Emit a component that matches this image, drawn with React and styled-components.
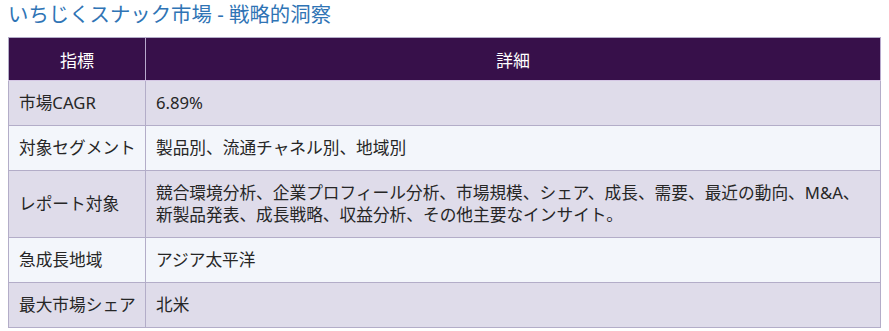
import styled, { createGlobalStyle } from "styled-components"

const GlobalStyle = createGlobalStyle`
    body {
        margin: 0;
        background: #ffffff;
        font-family: "Noto Sans", "Noto Sans CJK JP", sans-serif;
    }
`

const rows = [
    { label: "市場CAGR", detail: "6.89%" },
    { label: "対象セグメント", detail: "製品別、流通チャネル別、地域別" },
    {
        label: "レポート対象",
        detail: "競合環境分析、企業プロフィール分析、市場規模、シェア、成長、需要、最近の動向、M&A、新製品発表、成長戦略、収益分析、その他主要なインサイト。",
    },
    { label: "急成長地域", detail: "アジア太平洋" },
    { label: "最大市場シェア", detail: "北米" },
]

const App = () => {
    return (
        <>
            <GlobalStyle />
            <Page>
                <Title>いちじくスナック市場 - 戦略的洞察</Title>
                <Table>
                    <colgroup>
                        <col style={{ width: "137px" }} />
                        <col />
                    </colgroup>
                    <thead>
                        <tr>
                            <HeadCell>指標</HeadCell>
                            <HeadCell>詳細</HeadCell>
                        </tr>
                    </thead>
                    <tbody>
                        {rows.map((row, i) => (
                            <Row key={row.label} $alt={i % 2 === 1}>
                                <Cell $first>{row.label}</Cell>
                                <Cell>{row.detail}</Cell>
                            </Row>
                        ))}
                    </tbody>
                </Table>
            </Page>
        </>
    )
}

export default App

const Page = styled.div`
    padding: 0 8px;
    width: 873px;
`

const Title = styled.h2`
    margin: 0 0 8px 0;
    height: 29px;
    padding-top: 1px;
    box-sizing: border-box;
    font-family: "Noto Sans", "Noto Sans CJK JP", sans-serif;
    font-size: 20.4px;
    font-weight: 400;
    line-height: 26px;
    color: #2f74b5;
`

const Table = styled.table`
    width: 873px;
    border-collapse: collapse;
    border: 1px solid #b3adc8;
    table-layout: fixed;
`

const HeadCell = styled.th`
    height: 42px;
    padding: 0 10px;
    background: #37104a;
    color: #ffffff;
    font-size: 17px;
    font-weight: 400;
    text-align: center;
    border-right: 1px solid #b7a9cc;
    border-bottom: 1px solid #d4c6e4;
`

const Row = styled.tr`
    background: ${(props) => (props.$alt ? "#f3f6fb" : "#dfdcea")};
`

const Cell = styled.td`
    padding: 11px 8px 11px 10px;
    font-size: 16.7px;
    line-height: 22px;
    color: #262626;
    text-align: left;
    vertical-align: middle;
    border-right: 1px solid #b3adc8;
    border-bottom: 1px solid #b3adc8;
    white-space: ${(props) => (props.$first ? "nowrap" : "normal")};
`
